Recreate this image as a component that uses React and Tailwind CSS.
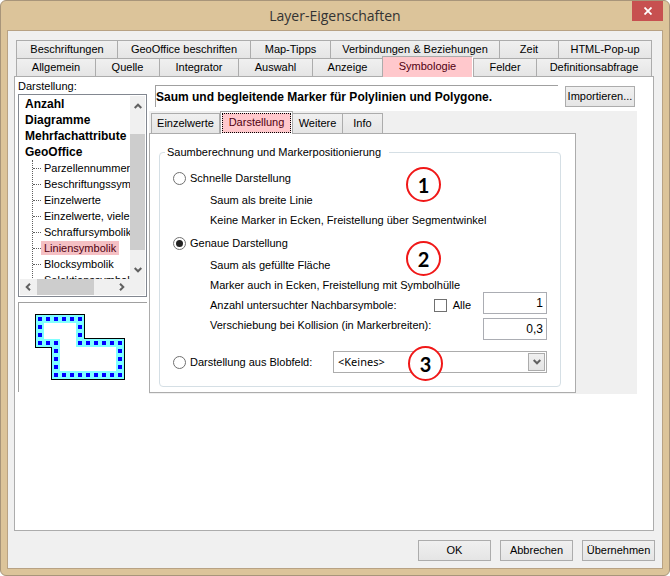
import React, { useState } from 'react';
import clsx from 'clsx';

const upperTabs = ['Beschriftungen', 'GeoOffice beschriften', 'Map-Tipps', 'Verbindungen & Beziehungen', 'Zeit', 'HTML-Pop-up'];
const lowerTabs = ['Allgemein', 'Quelle', 'Integrator', 'Auswahl', 'Anzeige', 'Symbologie', 'Felder', 'Definitionsabfrage'];
const groups = ['Anzahl', 'Diagramme', 'Mehrfachattribute', 'GeoOffice'];
const renderers = [
  'Parzellennummern',
  'Beschriftungssymbolik',
  'Einzelwerte',
  'Einzelwerte, viele',
  'Schraffursymbolik',
  'Liniensymbolik',
  'Blocksymbolik',
  'Selektionssymbolik'
];

// Marker entlang der Saumlinie
const markers = [
  [6, 6], [14, 6], [22, 6], [30, 6], [38, 6], [46, 6],
  [46, 14], [46, 22], [46, 30], [54, 30], [62, 30], [70, 30], [78, 30], [86, 30],
  [86, 38], [86, 46], [86, 54], [86, 62], [78, 62], [70, 62], [62, 62], [54, 62],
  [46, 62], [38, 62], [30, 62], [22, 62], [22, 54], [22, 46], [22, 38],
  [22, 30], [14, 30], [6, 30], [6, 22], [6, 14]
];

const raised = 'border border-[#acacac] bg-linear-to-b from-[#f0f0f0] to-[#e5e5e5]';

const Tab = ({ children, active, onClick }) => (
  <button
    type="button"
    role="tab"
    aria-selected={active}
    onClick={onClick}
    className={clsx(
      'whitespace-nowrap text-center',
      active
        ? 'relative z-10 -mt-[2px] -mb-px border-t border-r border-l border-t-[#acacac] border-r-white border-l-[#acacac] bg-[#ffc8cc] pb-px text-[#500010]'
        : 'border-t border-l border-[#acacac] bg-linear-to-b from-[#f0f0f0] to-[#e5e5e5] last:border-r'
    )}
  >
    {children}
  </button>
);

const Chevron = ({ className }) => (
  <svg viewBox="0 0 8 6" className={clsx('h-[6px] w-[8px]', className)} fill="none" stroke="#606060" strokeWidth="2">
    <path d="M0.7 1 L4 4.3 L7.3 1" />
  </svg>
);

const PushButton = ({ children, className }) => (
  <button type="button" className={clsx(raised, 'h-[21px] whitespace-nowrap', className)}>{children}</button>
);

const Radio = ({ children, checked, onChange }) => (
  <label className="flex h-5 items-center gap-1">
    <input
      type="radio"
      name="modus"
      checked={checked}
      onChange={onChange}
      className="grid size-[13px] appearance-none place-content-center rounded-full border border-[#707070] bg-white checked:before:size-[7px] checked:before:rounded-full checked:before:bg-[#222] checked:before:content-['']"
    />
    {children}
  </label>
);

const Badge = ({ children, className }) => (
  <span
    className={clsx(
      'absolute flex size-[35px] items-center justify-center rounded-full border-2 border-[#f01818] bg-white font-[Lato,sans-serif] text-[20px] leading-none font-bold',
      className
    )}
  >
    {children}
  </span>
);

const RendererTree = () => (
  <div className="grid grid-cols-[minmax(0,1fr)_15px] grid-rows-[183px_16px] border border-[#828790] bg-white p-px">
    <div className="overflow-hidden whitespace-nowrap leading-4" role="tree" aria-labelledby="tree-label">
      {groups.map(name => (
        <div key={name} role="treeitem" className="pl-[5px] text-[12px] font-bold">{name}</div>
      ))}
      <div className="ml-3 border-l border-dotted border-[#606060]">
        {renderers.map(name => (
          <div key={name} role="treeitem" className="flex h-4 items-center">
            <span className="w-2 shrink-0 border-t border-dotted border-[#606060]" />
            <span className={clsx('px-[3px] leading-[14px]', name === 'Liniensymbolik' && 'bg-[#f5c0c4] text-[#500010]')}>{name}</span>
          </div>
        ))}
      </div>
    </div>
    <div className="flex flex-col items-center bg-[#f0f0f0] pt-[7px] pb-[6px]">
      <Chevron className="rotate-180" />
      <div className="mt-[25px] h-[116px] w-full bg-[#cdcdcd]" />
      <Chevron className="mt-auto" />
    </div>
    <div className="flex items-center bg-[#f0f0f0] px-1">
      <Chevron className="rotate-90" />
      <div className="ml-[5px] h-full w-[57px] bg-[#cdcdcd]" />
      <Chevron className="ml-auto -rotate-90" />
    </div>
    <div className="bg-[#f0f0f0]" />
  </div>
);

const Preview = () => (
  <div className="mt-[5px] h-[90px] border-t border-l border-[#a0a0a0] pt-[10px] pl-[15px]">
    <svg viewBox="0 0 92 68" className="h-[68px] w-[92px]" shapeRendering="crispEdges">
      <path d="M1.5 1.5H50.5V25.5H90.5V66.5H17.5V34.5H1.5Z" fill="#80ffff" stroke="#000" />
      <path d="M10 10H42V34H82V58H26V26H10Z" fill="#fff" />
      {markers.map(([x, y]) => (
        <rect key={`${x}-${y}`} x={x - 2} y={y - 2} width="4" height="4" fill="#0000ff" />
      ))}
    </svg>
  </div>
);

const DisplayForm = () => {
  const [mode, setMode] = useState('genau');
  const [all, setAll] = useState(false);

  return (
    <div className="relative">
      <fieldset className="rounded-[4px] border border-[#d5dfe5] px-[13px] pb-[13px]">
        <legend className="-ml-2 h-4 pr-2 pl-[2px] leading-4">Saumberechnung und Markerpositionierung</legend>
        <div className="mt-2">
          <Radio checked={mode === 'schnell'} onChange={() => setMode('schnell')}>Schnelle Darstellung</Radio>
        </div>
        <div className="mt-[2px] pl-[37px] leading-5">
          <p>Saum als breite Linie</p>
          <p>Keine Marker in Ecken, Freistellung über Segmentwinkel</p>
        </div>
        <div className="mt-[3px]">
          <Radio checked={mode === 'genau'} onChange={() => setMode('genau')}>Genaue Darstellung</Radio>
        </div>
        <div className="mt-[2px] pl-[37px] leading-5">
          <p>Saum als gefüllte Fläche</p>
          <div className="flex">
            <div className="flex-1 pr-3">
              <p>Marker auch in Ecken, Freistellung mit Symbolhülle</p>
              <div className="flex justify-between">
                <label htmlFor="nachbarn">Anzahl untersuchter Nachbarsymbole:</label>
                <label className="flex items-center gap-[6px]">
                  <input
                    type="checkbox"
                    checked={all}
                    onChange={e => setAll(e.target.checked)}
                    className="size-[13px] appearance-none border border-[#707070] bg-white checked:bg-[#707070]"
                  />
                  Alle
                </label>
              </div>
              <label htmlFor="kollision" className="block">Verschiebung bei Kollision (in Markerbreiten):</label>
            </div>
            <div className="mt-[17px] flex w-16 flex-col gap-1">
              <input id="nachbarn" type="text" defaultValue="1" className="h-[22px] w-full border border-[#abadb3] px-[3px] text-right text-[12px]" />
              <input id="kollision" type="text" defaultValue="0,3" className="h-[22px] w-full border border-[#abadb3] px-[3px] text-right text-[12px]" />
            </div>
          </div>
        </div>
        <div className="mt-[11px] flex items-center justify-between">
          <Radio checked={mode === 'blob'} onChange={() => setMode('blob')}>Darstellung aus Blobfeld:</Radio>
          <div className="relative w-[214px]">
            <select aria-label="Blobfeld" className="h-[22px] w-full appearance-none border border-[#acacac] bg-white pl-1 font-['Noto_Sans',sans-serif] text-[11px]">
              <option>&lt;Keines&gt;</option>
            </select>
            <span className={clsx(raised, 'pointer-events-none absolute top-[2px] right-[2px] flex h-[18px] w-[17px] items-center justify-center')}>
              <Chevron />
            </span>
          </div>
        </div>
      </fieldset>
      <Badge className="top-[23px] left-[247px]">1</Badge>
      <Badge className="top-[97px] left-[247px]">2</Badge>
      <Badge className="top-[202px] left-[249px]">3</Badge>
    </div>
  );
};

export default function App() {
  const [tab, setTab] = useState('Symbologie');
  const [subTab, setSubTab] = useState('Darstellung');

  return (
    <div className="flex min-h-screen flex-col rounded-md border border-[#a8957a] bg-[#dcc49a] px-[6px] pb-[6px] font-['Liberation_Sans',Arial,sans-serif] text-[11px] text-black">
      <header className="grid h-[29px] grid-cols-[1fr_auto_1fr]">
        <h1 className="col-start-2 font-['Open_Sans',sans-serif] text-[14px] leading-[30px] text-[#333]">Layer-Eigenschaften</h1>
        <button type="button" aria-label="Schließen" className="flex h-5 w-[31px] items-center justify-center justify-self-end bg-[#c75050]">
          <svg viewBox="0 0 8 8" className="size-2" stroke="#fff" strokeWidth="1.8">
            <path d="M0.5 0.5 L7.5 7.5 M7.5 0.5 L0.5 7.5" />
          </svg>
        </button>
      </header>

      <main className="flex flex-1 flex-col border border-[#b8a284] bg-[#f0f0f0] pt-[9px] pr-[7px] pb-[7px] pl-[6px]">
        <nav role="tablist" className="pr-[3px] pl-[2px]">
          <div className="grid h-[18px] grid-cols-[101fr_133fr_80fr_169fr_59fr_94fr]">
            {upperTabs.map(name => <Tab key={name} active={tab === name} onClick={() => setTab(name)}>{name}</Tab>)}
          </div>
          <div className="grid h-[18px] grid-cols-[79fr_64fr_79fr_74fr_70fr_91fr_63fr_116fr]">
            {lowerTabs.map(name => <Tab key={name} active={tab === name} onClick={() => setTab(name)}>{name}</Tab>)}
          </div>
        </nav>

        <section className="mr-px flex flex-1 items-start border border-[#acacac] bg-white pr-4 pl-[3px]">
          <div className="w-[129px] shrink-0">
            <h2 id="tree-label" className="h-[17px] leading-[18px]">Darstellung:</h2>
            <RendererTree />
            <Preview />
          </div>

          <div className="ml-[2px] min-w-0 flex-1 pt-2">
            <div className="flex items-start justify-between pl-[6px]">
              <p className="mr-[7px] h-[22px] flex-1 border-t border-l border-[#a0a0a0] text-[12px] leading-[23px] font-bold whitespace-nowrap">
                Saum und begleitende Marker für Polylinien und Polygone.
              </p>
              <PushButton className="mt-px mr-[2px] w-[70px]">Importieren...</PushButton>
            </div>

            <div className="mt-1 bg-[#f0f0f0] pt-[2px] pr-[61px] pb-px">
              <div role="tablist" className="flex h-5 px-[2px]">
                {['Einzelwerte', 'Darstellung', 'Weitere', 'Info'].map(name => (
                  <button
                    key={name}
                    type="button"
                    role="tab"
                    aria-selected={subTab === name}
                    onClick={() => setSubTab(name)}
                    className={clsx(
                      subTab === name
                        ? 'relative -mt-[2px] -mb-px border border-b-0 border-[#acacac] bg-white p-px text-[#500010]'
                        : 'border-t border-r border-[#acacac] bg-linear-to-b from-[#f0f0f0] to-[#e5e5e5] first:border-l',
                      name === 'Einzelwerte' && 'w-[69px]',
                      name === 'Darstellung' && 'w-[73px]',
                      name === 'Weitere' && 'w-[50px]',
                      name === 'Info' && 'w-10'
                    )}
                  >
                    {subTab === name ? (
                      <span className="flex h-full items-center justify-center border border-dotted border-black bg-[#ffc8cc] pb-px">{name}</span>
                    ) : name}
                  </button>
                ))}
              </div>
              <div className="border border-[#acacac] bg-white pt-[10px] pr-[14px] pb-[5px] pl-[9px]">
                <DisplayForm />
              </div>
            </div>
          </div>
        </section>

        <footer className="mt-[9px] flex justify-end gap-[9px]">
          <PushButton className="w-[73px]">OK</PushButton>
          <PushButton className="w-[73px]">Abbrechen</PushButton>
          <PushButton className="w-[73px]">Übernehmen</PushButton>
        </footer>
      </main>
    </div>
  );
}
